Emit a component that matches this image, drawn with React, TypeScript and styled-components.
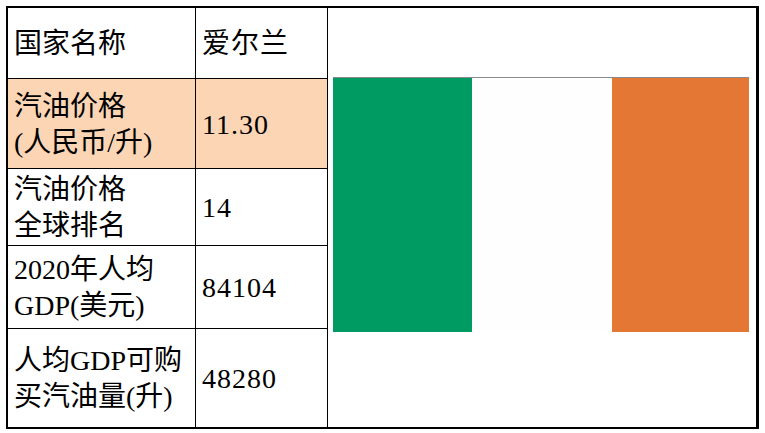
import React from "react";
import styled, { createGlobalStyle } from "styled-components";

const GlobalStyle = createGlobalStyle`
  html, body {
    margin: 0;
    padding: 0;
    background: #ffffff;
  }
  body {
    font-family: "Liberation Serif", "Noto Sans CJK SC", serif;
    color: #000000;
  }
`;

const Frame = styled.div`
  margin: 6px 0 0 6px;
  width: 753px;
  height: 423px;
  box-sizing: border-box;
  border: 2px solid #000;
  border-right-width: 3px;
  display: flex;
`;

const Table = styled.div`
  display: grid;
  grid-template-columns: 188px 131px;
  grid-template-rows: 71px 90px 77px 83px 1fr;
  border-right: 1px solid #000;
`;

const Cell = styled.div<{ $fill?: boolean; $last?: boolean; $first?: boolean }>`
  box-sizing: border-box;
  display: flex;
  align-items: center;
  padding: 2px 0 0 6px;
  background: ${(p) => (p.$fill ? "#fcd5b4" : "#ffffff")};
  border-bottom: ${(p) => (p.$last ? "none" : "1px solid #000")};
  border-right: ${(p) => (p.$first ? "1px solid #000" : "none")};
  font-size: 28px;
  line-height: 36px;
  white-space: nowrap;
  letter-spacing: ${(p) => (p.$first ? "0" : "1px")};
`;

const FlagPanel = styled.div`
  flex: 1;
  padding: 69px 0 0 5px;
`;

const Flag = styled.div`
  width: 416px;
  height: 255px;
  display: flex;
  border-top: 1px solid #8a8a8a;
  box-sizing: border-box;
`;

const Stripe = styled.div<{ $color: string; $width: number }>`
  width: ${(p) => p.$width}px;
  background: ${(p) => p.$color};
`;

const rows = [
  { label: ["国家名称"], value: "爱尔兰" },
  { label: ["汽油价格", "(人民币/升)"], value: "11.30", fill: true },
  { label: ["汽油价格", "全球排名"], value: "14" },
  { label: ["2020年人均", "GDP(美元)"], value: "84104" },
  { label: ["人均GDP可购", "买汽油量(升)"], value: "48280" },
];

export default function App() {
  return (
    <>
      <GlobalStyle />
      <Frame>
        <Table>
          {rows.map((r, i) => (
            <React.Fragment key={i}>
              <Cell $first $fill={r.fill} $last={i === rows.length - 1}>
                <div>
                  {r.label.map((l, j) => (
                    <div key={j}>{l}</div>
                  ))}
                </div>
              </Cell>
              <Cell $fill={r.fill} $last={i === rows.length - 1}>
                {r.value}
              </Cell>
            </React.Fragment>
          ))}
        </Table>
        <FlagPanel>
          <Flag>
            <Stripe $color="#009a63" $width={139} />
            <Stripe $color="#fefefe" $width={140} />
            <Stripe $color="#e47733" $width={137} />
          </Flag>
        </FlagPanel>
      </Frame>
    </>
  );
}
